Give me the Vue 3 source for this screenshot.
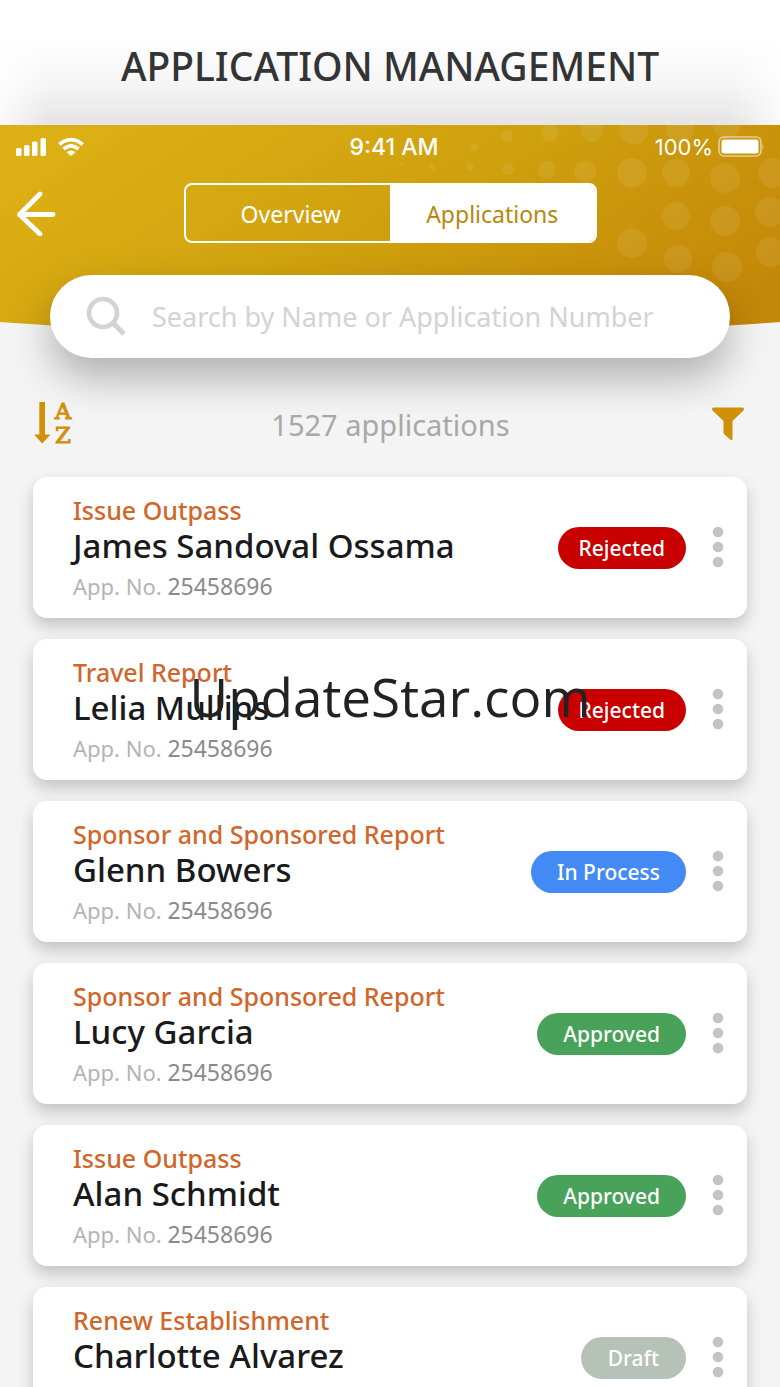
<script setup>
import { ref } from 'vue'

const tab = ref('applications')
const query = ref('')
const applications = [
  { type: 'Issue Outpass', name: 'James Sandoval Ossama', number: '25458696', status: 'Rejected' },
  { type: 'Travel Report', name: 'Lelia Mullins', number: '25458696', status: 'Rejected' },
  { type: 'Sponsor and Sponsored Report', name: 'Glenn Bowers', number: '25458696', status: 'In Process' },
  { type: 'Sponsor and Sponsored Report', name: 'Lucy Garcia', number: '25458696', status: 'Approved' },
  { type: 'Issue Outpass', name: 'Alan Schmidt', number: '25458696', status: 'Approved' },
  { type: 'Renew Establishment', name: 'Charlotte Alvarez', number: '25458696', status: 'Draft' },
]
const statusClass = (status) => status.toLowerCase().replace(' ', '-')

// Decorative halftone dots: x, y, radius
const dots = [
  [22, 38, 2], [52, 42, 3], [90, 42, 4], [94, 22, 4], [127, 11, 6], [128, 44, 6],
  [170, 8, 9], [167, 45, 9], [212, 6, 11], [205, 47, 11],
  [254, 5, 14], [252, 48, 15], [252, 118, 15],
  [300, 4, 14], [296, 48, 14], [296, 91, 14], [298, 134, 14],
  [347, 0, 14], [345, 53, 15], [345, 96, 15], [347, 142, 15],
  [393, 48, 15], [390, 87, 15], [391, 127, 15],
]
</script>

<template>
  <div class="page">
    <div class="banner"><h1>APPLICATION MANAGEMENT</h1></div>

    <header class="header">
      <svg class="backdrop" viewBox="0 0 780 212" preserveAspectRatio="none" aria-hidden="true">
        <defs>
          <linearGradient id="gold" x1="0" y1="0.3" x2="1" y2="0.7">
            <stop offset="0" stop-color="#dcb014" />
            <stop offset="0.5" stop-color="#cfa00e" />
            <stop offset="1" stop-color="#c48808" />
          </linearGradient>
        </defs>
        <path d="M0 0H780V197Q390 226 0 197Z" fill="url(#gold)" />
      </svg>
      <svg class="dots" viewBox="0 0 400 170" width="400" height="170" aria-hidden="true">
        <circle v-for="(d, i) in dots" :key="i" :cx="d[0]" :cy="d[1]" :r="d[2]" />
      </svg>

      <div class="status-bar">
        <div class="signals">
          <svg width="30" height="18" viewBox="0 0 30 18" fill="#fff" aria-label="Signal">
            <rect x="0" y="10" width="5.500" height="8" rx="1.500" />
            <rect x="8" y="7" width="5.500" height="11" rx="1.500" />
            <rect x="16" y="3.500" width="5.500" height="14.500" rx="1.500" />
            <rect x="24.500" y="0" width="5.500" height="18" rx="1.500" />
          </svg>
          <svg width="26" height="18" viewBox="0 0 26 18" fill="none" stroke="#fff" stroke-width="3.8" aria-label="Wi-Fi">
            <path d="M1.300 6.500Q13 -3.200 24.700 6.500" />
            <path d="M5.500 11Q13 4.800 20.500 11" />
            <path d="M8.500 14Q13 10.800 17.500 14L14 17.300Q13 18 12 17.300Z" fill="#fff" stroke="none" />
          </svg>
        </div>
        <span class="clock">9:41 AM</span>
        <div class="battery">
          <span>100%</span>
          <svg width="46" height="22" viewBox="0 0 46 22" aria-label="Battery">
            <rect x="1" y="1" width="42" height="19" rx="5" fill="none" stroke="#fff" stroke-opacity="0.55" stroke-width="1.600" />
            <rect x="3.500" y="3.500" width="37" height="14" rx="2.500" fill="#fff" />
            <path d="M44.500 7.500Q46.500 10.500 44.500 13.500Z" fill="#fff" fill-opacity="0.5" />
          </svg>
        </div>
      </div>

      <div class="nav">
        <button class="icon-button" type="button" aria-label="Back">
          <svg width="40" height="46" viewBox="0 0 40 46" fill="none" stroke="#fff" stroke-width="4.800" stroke-linecap="round" stroke-linejoin="round">
            <path d="M24 4L3.500 24.500L24 44M3.500 24.500H37" />
          </svg>
        </button>
        <div class="tabs" role="tablist">
          <button type="button" role="tab" :aria-selected="tab === 'overview'" :class="{ active: tab === 'overview' }" @click="tab = 'overview'">Overview</button>
          <button type="button" role="tab" :aria-selected="tab === 'applications'" :class="{ active: tab === 'applications' }" @click="tab = 'applications'">Applications</button>
        </div>
      </div>

      <label class="search">
        <svg width="42" height="42" viewBox="0 0 42 42" fill="none" stroke="#d3d3d3" stroke-width="4.600" aria-hidden="true">
          <circle cx="17" cy="17" r="14" />
          <path d="M27 27L38 38" stroke-width="5" />
        </svg>
        <input v-model="query" type="text" aria-label="Search applications" placeholder="Search by Name or Application Number" />
      </label>
    </header>

    <main>
      <div class="toolbar">
        <button class="icon-button" type="button" aria-label="Sort A to Z">
          <svg width="40" height="46" viewBox="0 0 40 46" fill="#d09008">
            <path d="M6.300 1H12V33.500H17.500L9.200 42.500L1 33.500H6.300Z" />
            <text x="30" y="18" text-anchor="middle">A</text>
            <text x="30" y="42" text-anchor="middle">Z</text>
          </svg>
        </button>
        <p>1527 applications</p>
        <button class="icon-button" type="button" aria-label="Filter">
          <svg width="34" height="34" viewBox="0 0 34 34" fill="#d09008">
            <path d="M2 0.500H32Q34 1.800 32.500 3.500L21.500 14V31.500Q21.500 33.800 19.500 32.800L13.500 27.500Q12.500 26.500 12.500 25V14L1.500 3.500Q0 1.800 2 0.500Z" />
          </svg>
        </button>
      </div>

      <ul class="list">
        <li v-for="(app, i) in applications" :key="i" class="card">
          <div class="details">
            <p class="type">{{ app.type }}</p>
            <h2>{{ app.name }}</h2>
            <p class="number">App. No. <span>{{ app.number }}</span></p>
          </div>
          <span class="badge" :class="statusClass(app.status)">{{ app.status }}</span>
          <button class="icon-button" type="button" :aria-label="'Options for ' + app.name">
            <svg width="12" height="44" viewBox="0 0 12 44" fill="#c4c4c4">
              <circle cx="6" cy="6" r="5.300" />
              <circle cx="6" cy="21" r="5.300" />
              <circle cx="6" cy="36" r="5.300" />
            </svg>
          </button>
        </li>
      </ul>
    </main>

    <div class="watermark">UpdateStar.com</div>
  </div>
</template>

<style>
body {
  background: #f4f4f4;
}
</style>

<style scoped>
.page {
  position: relative;
  height: 100vh;
  overflow: hidden;
  background: #f4f4f4;
  font-family: "Noto Sans", "Open Sans", sans-serif;
}
h1, h2, p, ul {
  margin: 0;
  padding: 0;
}
button {
  font-family: inherit;
  cursor: pointer;
}
.icon-button {
  display: flex;
  padding: 0;
  border: 0;
  background: none;
}
.banner {
  padding: 40px 16px 33px;
  background:
    linear-gradient(90deg, rgba(255, 255, 255, 0.8) 0, transparent 50px, transparent calc(100% - 50px), rgba(255, 255, 255, 0.8) 100%),
    linear-gradient(#fff 30%, #f5f5f5 68%, #e4e4e4 100%);
}
h1 {
  color: #333435;
  font-size: 39px;
  font-weight: 500;
  line-height: 52px;
  text-align: center;
}
.header {
  position: relative;
  padding: 8px 16px 0;
}
.backdrop {
  position: absolute;
  inset: 0 0 auto;
  width: 100%;
  height: 212px;
}
.dots {
  position: absolute;
  top: 0;
  right: 0;
  fill: #fff;
  fill-opacity: 0.08;
}
.status-bar {
  position: relative;
  display: grid;
  grid-template-columns: 1fr auto 1fr;
  align-items: center;
  height: 27px;
  color: #fff;
  font-family: Inter, sans-serif;
  font-size: 22px;
}
.signals {
  display: flex;
  gap: 12px;
}
.clock {
  padding-left: 8px;
  font-size: 23px;
  font-weight: 500;
}
.battery {
  display: flex;
  justify-content: flex-end;
  align-items: center;
  gap: 5px;
}
.nav {
  position: relative;
  display: grid;
  grid-template-columns: 1fr 413px 1fr;
  align-items: center;
  margin-top: 23px;
}
.tabs {
  display: grid;
  grid-template-columns: 1fr 1fr;
  height: 60px;
  box-sizing: border-box;
  border: 2px solid #fff;
  border-radius: 8px;
  overflow: hidden;
}
.tabs button {
  padding: 2px 0 0 6px;
  border: 0;
  background: none;
  color: #fff;
  font-size: 23px;
}
.tabs button.active {
  padding: 2px 0 0;
  background: #fff;
  color: #b8860b;
}
.search {
  position: relative;
  display: flex;
  align-items: center;
  gap: 24px;
  height: 83px;
  box-sizing: border-box;
  margin: 32px 34px 0;
  padding: 0 36px;
  border-radius: 42px;
  background: #fff;
  box-shadow: 0 20px 40px rgba(0, 0, 0, 0.28);
}
.search input {
  flex: 1;
  min-width: 0;
  padding: 0;
  border: 0;
  outline: 0;
  background: none;
  color: #555;
  font-family: inherit;
  font-size: 27px;
}
.search input::placeholder {
  color: #d3d3d3;
  opacity: 1;
}
.toolbar {
  position: relative;
  display: flex;
  justify-content: space-between;
  align-items: center;
  padding: 42px 35px 0 33px;
}
.toolbar text {
  font-family: "DejaVu Serif", serif;
  font-size: 23px;
  stroke: #d09008;
  stroke-width: 1px;
}
.toolbar p {
  padding: 4px 3px 2px 0;
  color: #a8a8a8;
  font-size: 29px;
  line-height: 42px;
}
.list {
  display: grid;
  gap: 21px;
  margin-top: 29px;
  padding: 0 33px;
  list-style: none;
}
.card {
  display: flex;
  align-items: center;
  height: 141px;
  box-sizing: border-box;
  padding: 0 23px 0 40px;
  border-radius: 14px;
  background: #fff;
  box-shadow: 0 8px 16px rgba(0, 0, 0, 0.2);
}
.details {
  flex: 1;
  min-width: 0;
  padding-top: 4px;
}
.type {
  color: #d0662a;
  font-size: 25px;
  font-weight: 500;
  line-height: 32px;
}
h2 {
  color: #1a1a1c;
  font-size: 33px;
  font-weight: 500;
  line-height: 40px;
}
.number {
  color: #b4b4b4;
  font-size: 22px;
  line-height: 40px;
}
.number span {
  color: #8a8a8a;
  font-size: 23px;
}
.badge {
  margin-right: 26px;
  padding: 0 21px;
  border-radius: 21px;
  color: #fff;
  font-size: 21px;
  font-weight: 500;
  line-height: 42px;
}
.rejected {
  background: #c80000;
}
.in-process {
  padding: 0 26px;
  background: #448af4;
}
.approved {
  padding: 0 26px;
  background: #48a25a;
}
.draft {
  padding: 0 27px;
  background: #b6c1b8;
}
.watermark {
  position: absolute;
  top: 661px;
  left: 0;
  right: 0;
  color: #222;
  font-family: "Open Sans", sans-serif;
  font-size: 53px;
  line-height: 72px;
  text-align: center;
  pointer-events: none;
}
</style>
